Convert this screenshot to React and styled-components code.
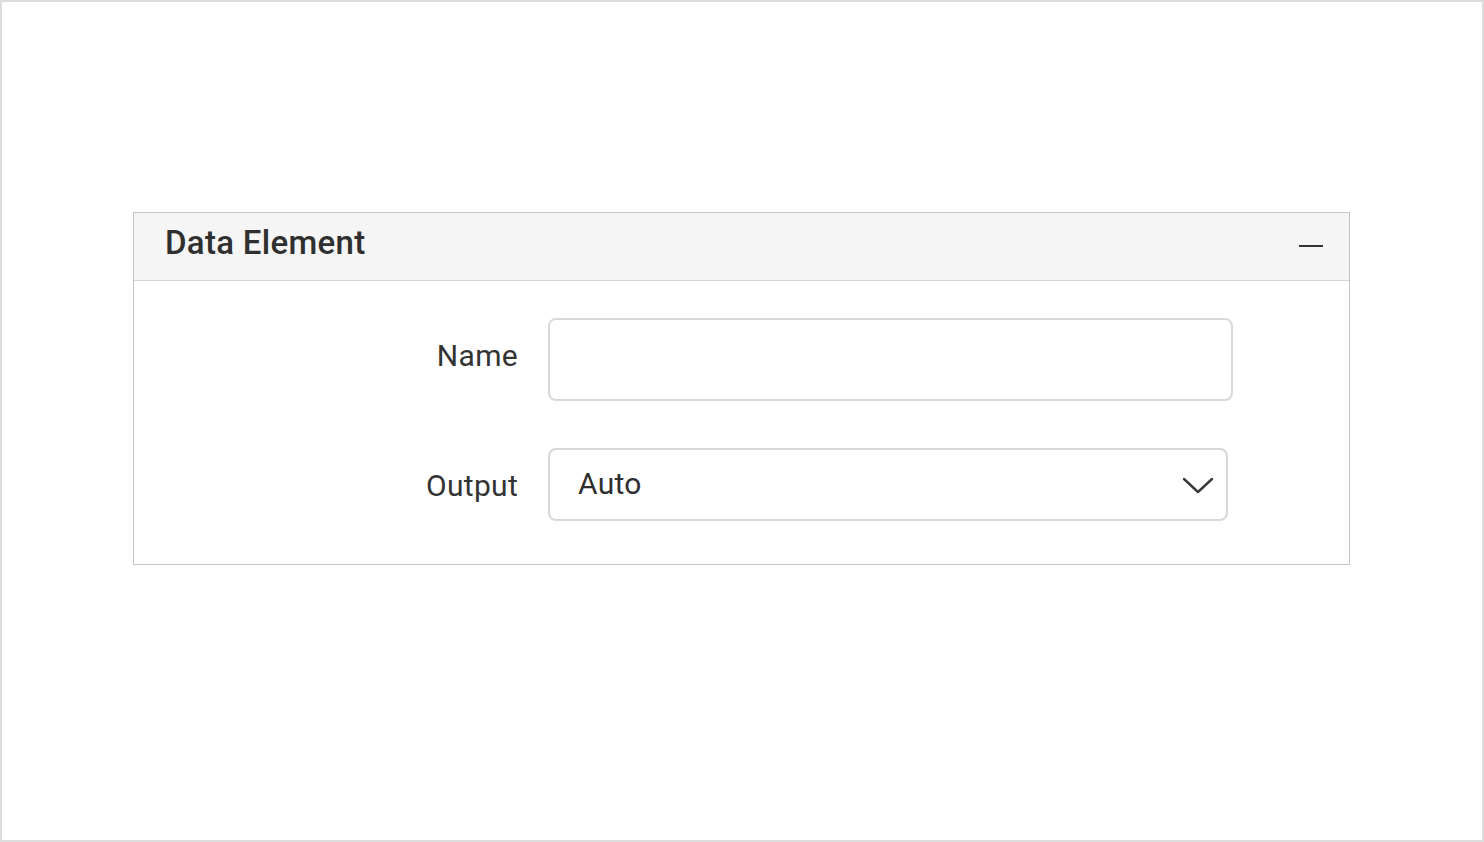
import React from "react";
import styled, { createGlobalStyle } from "styled-components";

const GlobalStyle = createGlobalStyle`
  html, body {
    margin: 0;
    padding: 0;
    background: #ffffff;
  }
  * {
    box-sizing: border-box;
  }
`;

const Frame = styled.div`
  width: 100vw;
  height: 100vh;
  border: 2px solid #dcdcdc;
  padding: 210px 132px 0 131px;
  font-family: Roboto, "Liberation Sans", sans-serif;
`;

const Panel = styled.section`
  border: 1px solid #c4c4c4;
  background: #fff;
`;

const Header = styled.div`
  display: flex;
  justify-content: space-between;
  align-items: center;
  height: 68px;
  padding: 0 26px 0 31px;
  background: #f5f5f5;
  border-bottom: 1px solid #d6d6d6;
`;

const Title = styled.h2`
  margin: 0;
  margin-top: -8px;
  font-size: 33px;
  font-weight: 500;
  color: #2f2f2f;
  letter-spacing: 0.3px;
`;

const Collapse = styled.span`
  display: block;
  width: 24px;
  height: 2px;
  margin-top: -2px;
  background: #333;
  cursor: pointer;
`;

const Body = styled.div`
  display: flex;
  flex-direction: column;
  gap: 47px;
  padding: 37px 0 43px;
`;

const Row = styled.div`
  display: grid;
  grid-template-columns: 384px ${(p) => p.$width}px;
  column-gap: 30px;
  align-items: center;
`;

const Label = styled.label`
  text-align: right;
  font-size: 30px;
  letter-spacing: 0.3px;
  color: #333;
  margin-top: ${(p) => p.$shift || 0}px;
`;

const TextBox = styled.input`
  height: ${(p) => p.$height}px;
  width: 100%;
  border: 2px solid #d9d9d9;
  border-radius: 8px;
  outline: none;
  padding: 0 28px;
  font: inherit;
  font-size: 30px;
`;

const Select = styled.div`
  display: flex;
  justify-content: space-between;
  align-items: center;
  height: 73px;
  border: 2px solid #d9d9d9;
  border-radius: 8px;
  padding: 0 12px 0 28px;
  font-size: 30px;
  letter-spacing: 0.3px;
  color: #2f2f2f;
  cursor: pointer;
`;

const Chevron = () => (
  <svg width="32" height="18" viewBox="0 0 32 18" fill="none">
    <path d="M2 3 L16 16 L30 3" stroke="#3a3a3a" strokeWidth="2.4" strokeLinecap="round" strokeLinejoin="round" />
  </svg>
);

export default function App() {
  return (
    <>
      <GlobalStyle />
      <Frame>
        <Panel>
          <Header>
            <Title>Data Element</Title>
            <Collapse />
          </Header>
          <Body>
            <Row $width={685}>
              <Label $shift={-8}>Name</Label>
              <TextBox $height={83} />
            </Row>
            <Row $width={680}>
              <Label $shift={2}>Output</Label>
              <Select>
                <span style={{ marginTop: -2 }}>Auto</span>
                <Chevron />
              </Select>
            </Row>
          </Body>
        </Panel>
      </Frame>
    </>
  );
}
